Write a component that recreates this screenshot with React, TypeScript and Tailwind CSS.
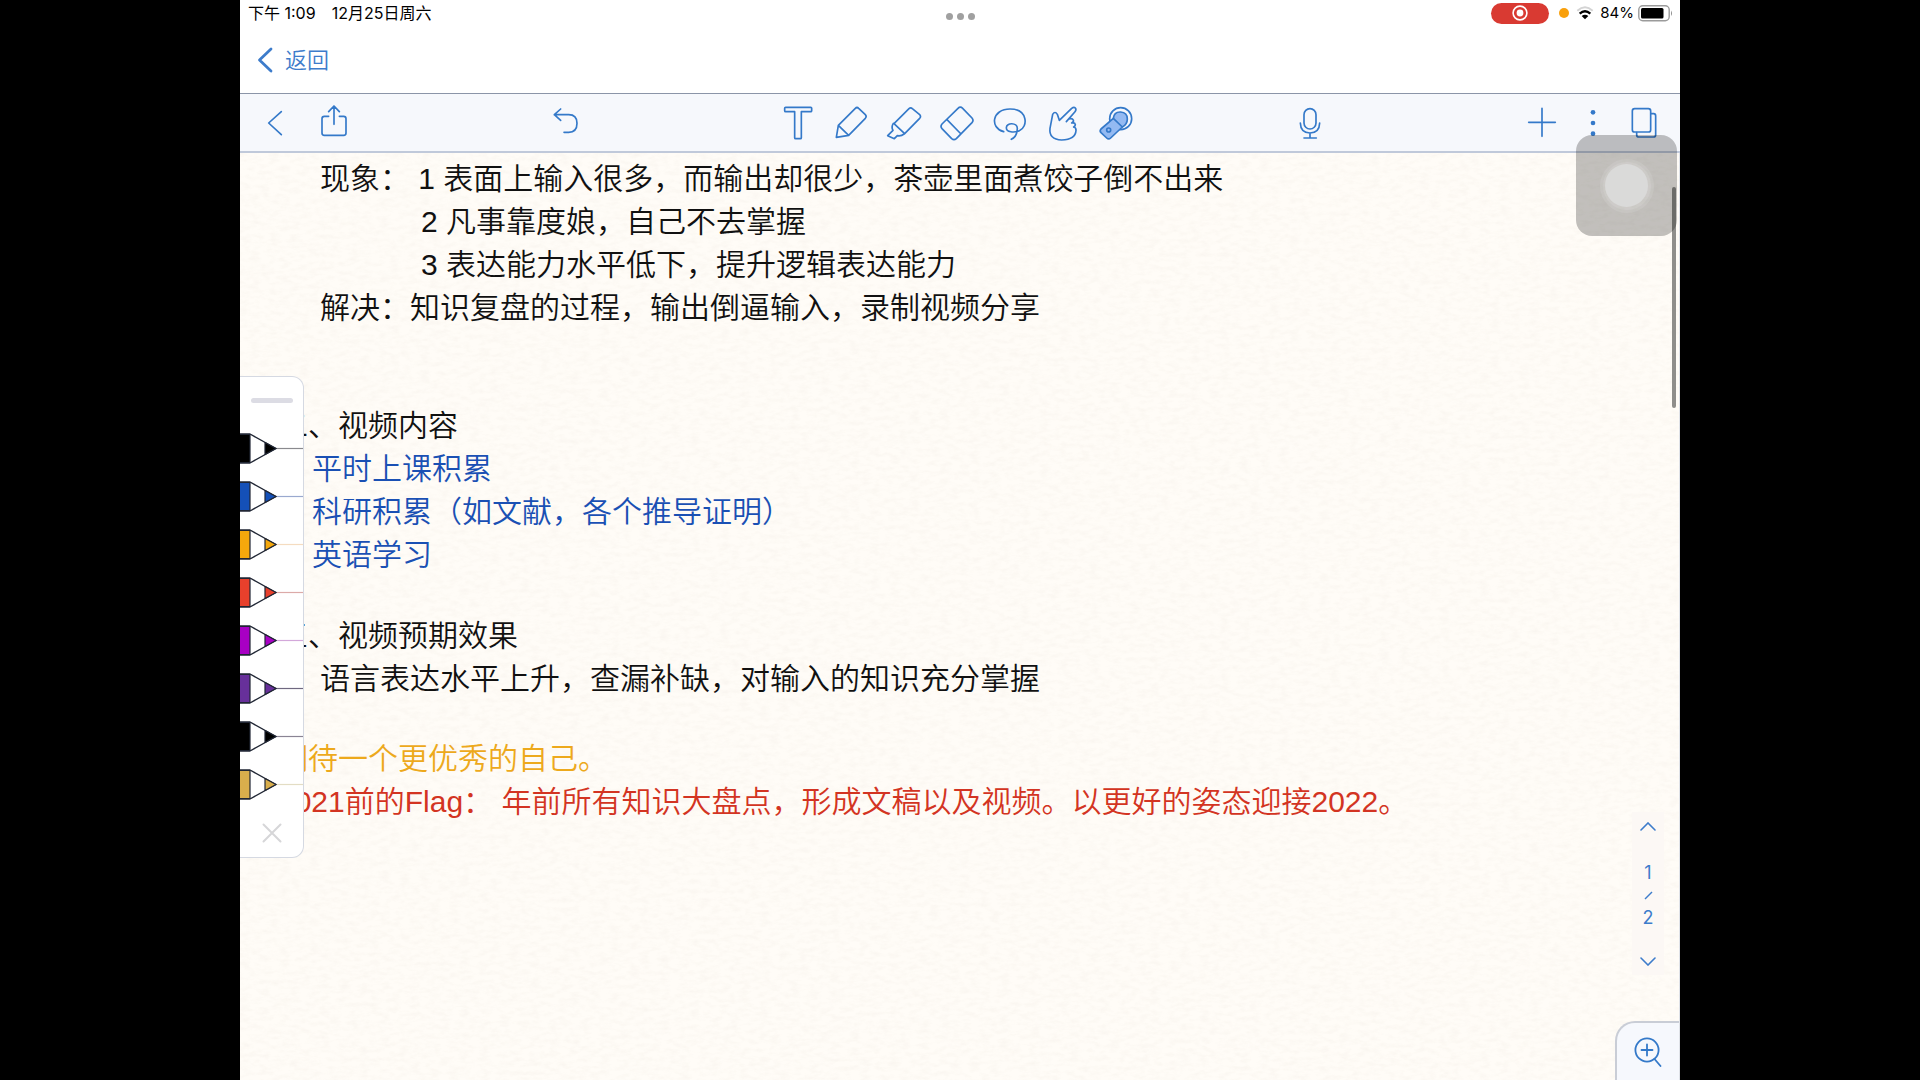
import type { ReactNode } from "react";

const pens = [
  { name: "黑色", color: "#000000", line: "#8a8a8e" },
  { name: "蓝色", color: "#1450b8", line: "#9aa9cf" },
  { name: "橙色", color: "#f5a80c", line: "#f5dcc0" },
  { name: "红色", color: "#e8402c", line: "#dcaaa8" },
  { name: "洋红", color: "#a800c4", line: "#d3a8da" },
  { name: "紫色", color: "#67309a", line: "#6f6880" },
  { name: "黑色细", color: "#000000", line: "#8a8494" },
  { name: "金色", color: "#d9ae4c", line: "#e3ddc4" },
];

function Icon({ children }: { children: ReactNode }) {
  return (
    <svg viewBox="0 0 108 108" className="size-9" fill="none" stroke="currentColor" strokeWidth="5" strokeLinecap="round" strokeLinejoin="round" aria-hidden="true">
      {children}
    </svg>
  );
}

function ToolButton({ label, className = "w-[51px]", children }: { label: string; className?: string; children: ReactNode }) {
  return (
    <button type="button" aria-label={label} className={`flex h-full items-center justify-center ${className}`}>
      <Icon>{children}</Icon>
    </button>
  );
}

// Latin letters and digits keep the regular weight next to the lighter Chinese text
function Latin({ children }: { children: ReactNode }) {
  return <span className="font-normal">{children}</span>;
}

function StatusBar() {
  return (
    <div className="grid h-7 grid-cols-3 items-center text-[15px] leading-6 text-black">
      <div className="flex gap-4 pb-0.5 pl-2 text-base leading-6">
        <span>下午 1:09</span>
        <span>12月25日周六</span>
      </div>
      <div className="flex justify-center gap-1 pt-1">
        <span className="size-[7px] rounded-full bg-[#a0a0a0]" />
        <span className="size-[7px] rounded-full bg-[#a0a0a0]" />
        <span className="size-[7px] rounded-full bg-[#a0a0a0]" />
      </div>
      <div className="flex items-center justify-end pr-[6px] pb-0.5">
        <span className="mr-[10px] flex h-[21px] w-[58px] items-center justify-center rounded-full bg-[#d93a32]">
          <svg viewBox="0 0 16 16" className="size-4" aria-hidden="true">
            <circle cx="8" cy="8" r="6.9" fill="none" stroke="#fff" strokeWidth="1.6" />
            <circle cx="8" cy="8" r="3.4" fill="#fff" />
          </svg>
        </span>
        <span className="mr-[7px] size-[10px] rounded-full bg-[#f9a00c]" />
        <svg viewBox="0 0 54 42" className="mr-[6px] h-[14px] w-[18px]" fill="none" strokeWidth="6" aria-hidden="true">
          <path d="M4 14 Q27 -6 50 14" stroke="#d4d4d4" />
          <path d="M11 23 Q27 9 43 23" stroke="#000" strokeWidth="7" />
          <path d="M27 40 L17 30 Q27 23 37 30 Z" fill="#000" />
        </svg>
        <span>84%</span>
        <svg viewBox="0 0 36 17" className="ml-1 h-[17px] w-9" aria-hidden="true">
          <rect x="0.8" y="0.8" width="30.4" height="15" rx="4" fill="none" stroke="#9b9b9b" strokeWidth="1.4" />
          <rect x="3" y="3" width="22.5" height="10.6" rx="1.5" fill="#000" />
          <path d="M33 5.5 Q35 8.3 33 11 Z" fill="#8d8d8d" />
        </svg>
      </div>
    </div>
  );
}

function Toolbar() {
  return (
    <div className="grid h-[60px] shrink-0 grid-cols-[1fr_auto_1fr] border-t border-b-2 border-t-[#8b95a8] border-b-[#c0c9da] bg-[#f6f8fc] text-[#3479c9]">
      <div className="flex pl-[9px]">
        <ToolButton label="返回上一级"><path d="M73 20 L35 54 L73 89" /></ToolButton>
        <ToolButton label="分享" className="ml-2 w-[51px]">
          <path d="M38 34 H25 Q18 34 18 41 V84 Q18 91 25 91 H83 Q90 91 90 84 V41 Q90 34 83 34 H70 M54 3 V58 M38 20 L54 3 L70 20" />
        </ToolButton>
        <ToolButton label="撤销" className="mr-[180px] ml-auto w-[51px]">
          <path d="M38 12 L19 29 L38 46 M19 29 H62 Q87 29 87 55 Q87 82 62 82 H48" />
        </ToolButton>
      </div>

      <div className="flex pr-[6px]">
        <ToolButton label="文本" className="w-[53px]">
          <path d="M17 7 H92 Q95 7 95 10 V17 Q95 20 92 20 H64 V98 Q64 101 61 101 H47 Q44 101 44 98 V20 H17 Q14 20 14 17 V10 Q14 7 17 7 Z" />
        </ToolButton>
        <ToolButton label="铅笔" className="w-[53px]">
          <path d="M10 97 L16 61 L67 10 Q72 5 77 10 L97 29 Q102 34 97 40 L47 91 Z M16 61 L47 91" />
        </ToolButton>
        <ToolButton label="荧光笔" className="w-[53px]">
          <path d="M24 56 L69 11 Q74 6 79 11 L101 29 Q106 34 101 40 L56 86 Z" />
          <path d="M22 55 Q15 66 21 76 L5 92 L25 101 L34 92 Q46 94 54 87" />
        </ToolButton>
        <ToolButton label="橡皮擦" className="w-[53px]">
          <path d="M57 10 Q64 3 71 10 L99 39 Q105 46 99 53 L52 101 Q45 107 38 101 L9 71 Q3 64 9 57 Z M24 44 L66 87" />
        </ToolButton>
        <ToolButton label="套索" className="w-[53px]">
          <path d="M35 80 C-8 68 0 12 54 12 C108 12 109 66 82 77 C66 84 43 82 43 68 C43 52 76 52 76 70 C76 88 68 98 58 103" />
        </ToolButton>
        <ToolButton label="手势" className="w-[53px]">
          <path d="M43 46 L37 28 Q30 17 23 28 L15 70 Q11 103 50 105 Q92 104 93 76 M43 46 L80 10 Q87 5 91 9 Q95 14 90 20 L64 50 M72 42 Q82 39 85 45 Q87 50 80 54 M82 54 Q90 53 91 59 Q91 63 86 66 M87 66 Q94 68 93 78" />
        </ToolButton>
        <ToolButton label="激光笔" className="w-[53px]">
          <circle cx="68" cy="41" r="33" />
          <path d="M46 40 Q48 20 68 21 Q88 22 88 42 Q88 58 73 66" fill="#94baf2" />
          <path d="M46 40 L73 66 L38 99 Q32 105 26 99 L9 83 Q4 78 9 72 Z" fill="#94baf2" />
          <circle cx="32" cy="75" r="6" />
        </ToolButton>
      </div>

      <div className="flex pr-[11px]">
        <ToolButton label="录音" className="mr-auto ml-[136px] w-[51px]">
          <rect x="36" y="11" width="36" height="61" rx="18" />
          <path d="M25 54 Q26 84 54 84 Q82 84 83 54 M54 84 V99 M36 99 H73" />
        </ToolButton>
        <ToolButton label="添加"><path d="M14 52 H94 M54 10 V94" /></ToolButton>
        <ToolButton label="更多">
          <g fill="currentColor" stroke="none">
            <circle cx="54" cy="22" r="7" />
            <circle cx="54" cy="54" r="7" />
            <circle cx="54" cy="86" r="7" />
          </g>
        </ToolButton>
        <ToolButton label="页面">
          <rect x="19" y="11" width="55" height="70" rx="7" />
          <path d="M76 26 H83 Q89 26 89 33 V89 Q89 96 82 96 H39 Q32 96 32 89 V83" />
        </ToolButton>
      </div>
    </div>
  );
}

function PenPanel() {
  return (
    <div className="absolute top-1/2 left-0 flex w-16 -translate-y-1/2 flex-col rounded-r-xl border border-l-0 border-[#d5d9e2] bg-white">
      <div className="flex h-12 items-center justify-center">
        <span className="h-[5px] w-[42px] rounded-full bg-[#dcdce4]" />
      </div>
      {pens.map((pen) => (
        <button key={pen.name} type="button" aria-label={pen.name} className="h-12">
          <svg viewBox="0 0 63 48" className="h-12 w-full" strokeLinejoin="round" aria-hidden="true">
            <path d="M36 23.5 H63" stroke={pen.line} strokeWidth="1.2" />
            <path d="M-2 9 H10 L36 23.5 L10 38 H-2" fill="#fff" stroke="#202634" strokeWidth="1.4" />
            <path d="M-2 9.5 H10 V37.5 H-2 Z" fill={pen.color} stroke="#202634" strokeWidth="1.2" />
            <path d="M25 17.5 L36 23.5 L25 29.5 Z" fill={pen.color} stroke="#202634" strokeWidth="1.2" />
          </svg>
        </button>
      ))}
      <button type="button" aria-label="关闭" className="flex h-12 items-center justify-center">
        <svg viewBox="0 0 20 20" className="size-5" stroke="#d6d6d8" strokeWidth="2" strokeLinecap="round" aria-hidden="true">
          <path d="M1.5 1.5 L18.5 18.5 M18.5 1.5 L1.5 18.5" />
        </svg>
      </button>
    </div>
  );
}

function Note() {
  return (
    <article className="relative pt-1 pl-[38px] font-['Liberation_Sans','Noto_Sans_CJK_SC',sans-serif] text-[30px] leading-[43px] font-[350] whitespace-nowrap text-[#111]">
      <section className="pl-[42px]">
        <p>现象： <Latin>1</Latin> 表面上输入很多，而输出却很少，茶壶里面煮饺子倒不出来</p>
        <p className="pl-[101px]"><Latin>2</Latin> 凡事靠度娘，自己不去掌握</p>
        <p className="pl-[101px]"><Latin>3</Latin> 表达能力水平低下，提升逻辑表达能力</p>
        <p>解决：知识复盘的过程，输出倒逼输入，录制视频分享</p>
      </section>
      <section className="mt-[75px]">
        <h2>二、视频内容</h2>
        <div className="pl-[34px] text-[#1a50b4]">
          <p>平时上课积累</p>
          <p>科研积累（如文献，各个推导证明）</p>
          <p>英语学习</p>
        </div>
      </section>
      <section className="mt-[38px]">
        <h2>三、视频预期效果</h2>
        <p className="pl-[42px]">语言表达水平上升，查漏补缺，对输入的知识充分掌握</p>
      </section>
      <section className="mt-[37px]">
        <p className="text-[#eda91c]">期待一个更优秀的自己。</p>
        <p className="text-[#d33422]">
          <Latin>2021</Latin>前的<Latin>Flag</Latin>： 年前所有知识大盘点，形成文稿以及视频。以更好的姿态迎接<Latin>2022</Latin>。
        </p>
      </section>
    </article>
  );
}

export default function App() {
  return (
    <div className="flex h-screen justify-center bg-black font-[Inter,'Noto_Sans_CJK_SC',sans-serif]">
      <div className="relative flex aspect-[4/3] h-full flex-col overflow-hidden bg-white">
        <StatusBar />
        <nav className="flex h-[65px] shrink-0 items-center pl-4">
          <a href="#" className="flex items-center gap-3 pb-0.5 text-[22px] leading-7 font-[350] text-[#3d7ccb]">
            <svg viewBox="0 0 17 26" className="h-[26px] w-[17px]" fill="none" stroke="currentColor" strokeWidth="2.8" strokeLinecap="round" strokeLinejoin="round" aria-hidden="true">
              <path d="M15 2 L3.5 13 L15 24" />
            </svg>
            返回
          </a>
        </nav>
        <Toolbar />

        <main className="relative min-h-0 flex-1 overflow-hidden border-r border-[#dfe2e8] bg-[#fffcf7]">
          {/* paper grain */}
          <svg className="absolute inset-0 size-full" aria-hidden="true">
            <filter id="grain" x="0" y="0" width="100%" height="100%">
              <feTurbulence type="fractalNoise" baseFrequency="0.1 0.22" numOctaves="3" seed="4" />
              <feColorMatrix values="0 0 0 0 0.52  0 0 0 0 0.44  0 0 0 0 0.36  0.3 0 0 0 -0.12" />
            </filter>
            <rect width="100%" height="100%" filter="url(#grain)" opacity="0.5" />
          </svg>

          <Note />
          <PenPanel />

          <div className="absolute right-[15px] bottom-[105px] flex w-8 flex-col items-center bg-[#fcf8f5] text-lg leading-[22px] text-[#3d7ccb]">
            <button type="button" aria-label="上一页" className="flex h-7 w-8 items-center justify-center">
              <svg viewBox="0 0 16 9" className="h-[9px] w-4" fill="none" stroke="currentColor" strokeWidth="1.6" strokeLinecap="round" aria-hidden="true"><path d="M1 8 L8 1 L15 8" /></svg>
            </button>
            <span className="mt-[22px]">1</span>
            <svg viewBox="0 0 9 9" className="my-[7px] size-[9px]" stroke="currentColor" strokeWidth="1.5" aria-hidden="true"><path d="M1 8 L8 1" /></svg>
            <span>2</span>
            <button type="button" aria-label="下一页" className="mt-[18px] flex h-7 w-8 items-center justify-center">
              <svg viewBox="0 0 16 9" className="h-[9px] w-4" fill="none" stroke="currentColor" strokeWidth="1.6" strokeLinecap="round" aria-hidden="true"><path d="M1 1 L8 8 L15 1" /></svg>
            </button>
          </div>

          <button type="button" aria-label="放大" className="absolute right-0 bottom-0 flex h-[59px] w-16 items-center justify-center rounded-tl-[20px] border-t-2 border-l-2 border-[#c9cdd6] bg-[#f6f8fd] text-[#3479c9]">
            <svg viewBox="0 0 28 30" className="h-[30px] w-7" fill="none" stroke="currentColor" strokeWidth="1.8" strokeLinecap="round" aria-hidden="true">
              <circle cx="13" cy="13" r="11.6" />
              <path d="M13 7.5 V18.5 M7.5 13 H18.5 M20.5 22 L26.5 29" />
            </svg>
          </button>

          <span className="absolute top-[34px] right-[3px] h-[221px] w-1 rounded-full bg-[#8f8e8b]" />
        </main>

        {/* floating assistive button */}
        <button type="button" aria-label="辅助触控" className="absolute top-[135px] right-[3px] flex size-[101px] items-center justify-center rounded-2xl bg-black/24">
          <span className="flex size-[54px] items-center justify-center rounded-full bg-white/10">
            <span className="flex size-12 items-center justify-center rounded-full bg-white/10">
              <span className="size-[43px] rounded-full bg-[#dadad9]" />
            </span>
          </span>
        </button>
      </div>
    </div>
  );
}
